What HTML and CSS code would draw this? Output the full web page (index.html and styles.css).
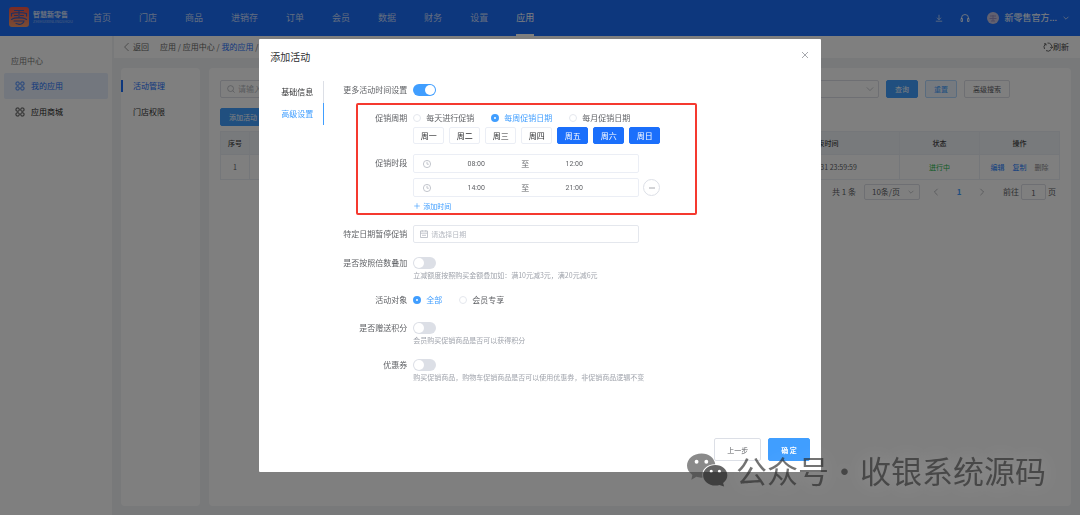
FILE: index.html
```html
<!DOCTYPE html>
<html lang="zh-CN">
<head>
<meta charset="utf-8">
<title>添加活动</title>
<link rel="stylesheet" href="styles.css">
</head>
<body>
<div class="app">
  <header class="topbar">
    <a class="brand" href="#">
      <svg class="brand-mark" viewBox="0 0 20 20" aria-hidden="true">
        <defs><linearGradient id="mark" x1="0" y1="0" x2="0" y2="1"><stop offset="0" stop-color="#f4564a"/><stop offset="1" stop-color="#f59a6a"/></linearGradient></defs>
        <rect width="20" height="20" rx="3" fill="url(#mark)"/>
        <g fill="none" stroke="#3a62c4" stroke-width="1.1" stroke-linecap="round">
          <path d="M5.500 3.500h9M2.500 9V6.500Q10 4.500 17.500 6.500V9M10 3.500v7.500M5.500 8.500h3M11.500 8.500h3M2.500 12.500c3-2.500 12-2.500 15 0M5 14h10c0 2-3 3.500-5 3.500M7 16.500l4 1"/>
        </g>
      </svg>
      <span class="brand-text"><span class="brand-name">智慧新零售</span><span class="brand-sub">ZHIHUIXINLINGSHOU</span></span>
    </a>
    <nav class="topnav">
      <a href="#">首页</a><a href="#">门店</a><a href="#">商品</a><a href="#">进销存</a><a href="#">订单</a><a href="#">会员</a><a href="#">数据</a><a href="#">财务</a><a href="#">设置</a><a class="active" href="#">应用</a>
    </nav>
    <div class="tools">
      <button class="plain" aria-label="下载"><svg class="ico small" viewBox="0 0 10 10"><path d="M5 1v6M2.500 4.700L5 7.200l2.500-2.500M1 9h8"/></svg></button>
      <button class="plain" aria-label="客服"><svg class="ico" viewBox="0 0 10 10"><path d="M1.500 6V5a3.500 3.500 0 0 1 7 0v1M1 5.500h1.500V8.500H1zM7.500 5.500H9V8.500H7.500z"/></svg></button>
      <button class="plain user"><svg class="avatar" viewBox="0 0 12 12"><circle cx="6" cy="6" r="6" fill="#c4c2e0"/><path d="M3 4h6M2.500 6.500h7M6 3v6M4 9h4" fill="none" stroke="#9a93c4"/></svg><span>新零售官方...</span><svg class="ico small" viewBox="0 0 10 10"><path d="M2 3.500l3 3 3-3"/></svg></button>
    </div>
  </header>
  <div class="body">
    <aside class="sidebar">
      <h2>应用中心</h2>
      <a class="active" href="#"><svg class="ico" viewBox="0 0 10 10"><rect x="1" y="1" width="3.200" height="3.200" rx="1"/><rect x="5.800" y="1" width="3.200" height="3.200" rx="1"/><rect x="1" y="5.800" width="3.200" height="3.200" rx="1"/><rect x="5.800" y="5.800" width="3.200" height="3.200" rx="1"/></svg>我的应用</a>
      <a href="#"><svg class="ico" viewBox="0 0 10 10"><rect x="1" y="1" width="3.200" height="3.200" rx="1"/><rect x="5.800" y="1" width="3.200" height="3.200" rx="1"/><rect x="1" y="5.800" width="3.200" height="3.200" rx="1"/><rect x="5.800" y="5.800" width="3.200" height="3.200" rx="1"/></svg>应用商城</a>
    </aside>
    <div class="content">
      <div class="crumbs">
        <button class="plain back"><svg class="ico small" viewBox="0 0 10 10"><path d="M7 0L2 5l5 5"/></svg>返回</button>
        <span>应用 / 应用中心 / <a href="#">我的应用</a> /</span>
        <button class="plain refresh"><svg class="ico" viewBox="0 0 10 10"><path d="M1.500 7A4 4 0 0 1 2.500 2M1 1.800h2v1.700M4.500 1a4 4 0 0 1 4.300 5M7.200 5.200l1.500 1.200L9.800 5M8 7.700A4 4 0 0 1 3 8.600"/></svg>刷新</button>
      </div>
      <div class="panels">
        <nav class="subnav"><a class="active" href="#">活动管理</a><a href="#">门店权限</a></nav>
        <main class="main">
          <div class="filters">
            <label class="search"><svg class="ico small" viewBox="0 0 10 10"><circle cx="4.500" cy="4.500" r="3.700"/><path d="M7.300 7.300L9.500 9.500"/></svg><input type="text" placeholder="请输入" aria-label="搜索"></label>
            <span class="select wide"><select aria-label="状态筛选"><option></option></select><svg class="ico small" viewBox="0 0 10 10"><path d="M1 3l4 4 4-4"/></svg></span>
            <button class="btn primary">查询</button>
            <button class="btn soft">重置</button>
            <button class="btn">高级搜索</button>
          </div>
          <button class="btn primary add">添加活动</button>
          <table class="grid">
            <colgroup><col class="c-no"><col><col class="c-time"><col class="c-act"><col class="c-act"></colgroup>
            <thead><tr><th>序号</th><th></th><th>结束时间</th><th>状态</th><th>操作</th></tr></thead>
            <tbody><tr><td>1</td><td></td><td>2024-12-31 23:59:59</td><td class="ok">进行中</td><td><div class="acts"><a href="#">编辑</a><a href="#">复制</a><a class="muted" href="#">删除</a></div></td></tr></tbody>
          </table>
          <div class="pager">
            <span class="total">共 1 条</span>
            <span class="select size"><select aria-label="每页条数"><option>10条/页</option></select><svg class="ico small" viewBox="0 0 10 10"><path d="M2 3.500l3 3 3-3"/></svg></span>
            <button class="plain step" aria-label="上一页"><svg class="ico small" viewBox="0 0 10 10"><path d="M7 1L3 5l4 4"/></svg></button>
            <button class="plain current">1</button>
            <button class="plain step" aria-label="下一页"><svg class="ico small" viewBox="0 0 10 10"><path d="M3 1l4 4-4 4"/></svg></button>
            <label class="jump">前往<input type="text" value="1">页</label>
          </div>
        </main>
      </div>
    </div>
  </div>
</div>

<div class="mask">
  <section class="dialog" role="dialog" aria-labelledby="dlg-title">
    <div class="dialog-head">
      <h1 id="dlg-title">添加活动</h1>
      <button class="plain close" aria-label="关闭"><svg class="ico" viewBox="0 0 10 10"><path d="M2 2l6 6M8 2L2 8"/></svg></button>
    </div>
    <div class="dialog-body">
      <nav class="tabs"><a href="#">基础信息</a><a class="active" href="#">高级设置</a></nav>
      <form class="form">
        <div class="row">
          <label class="label" for="more">更多活动时间设置</label>
          <input class="switch" type="checkbox" id="more" checked>
        </div>
        <div class="marked">
          <div class="row" role="radiogroup" aria-label="促销周期">
            <span class="label">促销周期</span>
            <div class="radios">
              <label class="daily"><input type="radio" name="cycle">每天进行促销</label>
              <label class="weekly"><input type="radio" name="cycle" checked>每周促销日期</label>
              <label><input type="radio" name="cycle">每月促销日期</label>
            </div>
          </div>
          <div class="days">
            <button type="button">周一</button><button type="button">周二</button><button type="button">周三</button><button type="button">周四</button><button type="button" class="on">周五</button><button type="button" class="on">周六</button><button type="button" class="on">周日</button>
          </div>
          <div class="row top">
            <span class="label">促销时段</span>
            <div class="times">
              <div class="time-row">
                <div class="range"><svg class="ico" viewBox="0 0 10 10"><circle cx="5" cy="5" r="3.600"/><path d="M5 2.800V5.200h1.800"/></svg><input type="text" value="08:00" aria-label="开始时间"><span>至</span><input type="text" value="12:00" aria-label="结束时间"></div>
              </div>
              <div class="time-row">
                <div class="range"><svg class="ico" viewBox="0 0 10 10"><circle cx="5" cy="5" r="3.600"/><path d="M5 2.800V5.200h1.800"/></svg><input type="text" value="14:00" aria-label="开始时间"><span>至</span><input type="text" value="21:00" aria-label="结束时间"></div>
                <button type="button" class="minus" aria-label="删除时间"><svg class="ico" viewBox="0 0 10 10"><path d="M2 5h6"/></svg></button>
              </div>
              <button type="button" class="plain add-time"><svg class="ico small" viewBox="0 0 10 10"><path d="M1.500 5h7M5 1.500v7"/></svg>添加时间</button>
            </div>
          </div>
        </div>
        <div class="row date-row">
          <label class="label" for="pause">特定日期暂停促销</label>
          <div class="date"><svg class="ico" viewBox="0 0 10 10"><path d="M1.500 2h7v6.500h-7zM1.500 4.200h7M3.200 1.200v1.500M6.800 1.200v1.500M3 6.300h4"/></svg><input type="text" id="pause" placeholder="请选择日期"></div>
        </div>
        <div class="row">
          <label class="label" for="stack">是否按照倍数叠加</label>
          <input class="switch" type="checkbox" id="stack">
        </div>
        <p class="hint">立减额度按照购买金额叠加如：满10元减3元，满20元减6元</p>
        <div class="row target" role="radiogroup" aria-label="活动对象">
          <span class="label">活动对象</span>
          <div class="radios">
            <label class="all"><input type="radio" name="target" checked>全部</label>
            <label><input type="radio" name="target">会员专享</label>
          </div>
        </div>
        <div class="row points">
          <label class="label" for="points">是否赠送积分</label>
          <input class="switch" type="checkbox" id="points">
        </div>
        <p class="hint">会员购买促销商品是否可以获得积分</p>
        <div class="row coupon">
          <label class="label" for="coupon">优惠券</label>
          <input class="switch" type="checkbox" id="coupon">
        </div>
        <p class="hint">购买促销商品，购物车促销商品是否可以使用优惠券，非促销商品逻辑不变</p>
      </form>
    </div>
    <div class="dialog-foot">
      <button class="btn big">上一步</button>
      <button class="btn big confirm">确 定</button>
    </div>
  </section>
</div>

<div class="watermark">
  <svg viewBox="0 0 42 34" aria-hidden="true">
    <path class="bubble-back" fill-rule="evenodd" d="M15 0C6.500 0 0 5.500 0 12.500c0 4 2 7 5.500 9.500L4.500 27l5-3c2 .7 4.500 1 6.500.8C14 17 20 11 29 11 28 4.500 22.500 0 15 0zM9.800 6.500a2 2 0 1 1 0 4 2 2 0 0 1 0-4zM19.800 6.500a2 2 0 1 1 0 4 2 2 0 0 1 0-4z"/>
    <path class="bubble-front" fill-rule="evenodd" d="M29 12c-7 0-12.500 4.600-12.500 10.400S22 33 29 33c1.500 0 3-.3 4.300-.7L38 34l-1-3.800c2.800-2 4.300-4.700 4.300-7.800C41.300 16.600 36 12 29 12zM24.800 16.800a1.600 1.600 0 1 1 0 3.200 1.600 1.600 0 0 1 0-3.200zM33.200 16.800a1.600 1.600 0 1 1 0 3.200 1.600 1.600 0 0 1 0-3.200z"/>
  </svg>
  <span>公众号</span><span class="dot">·</span><span>收银系统源码</span>
</div>
</body>
</html>
```
FILE: styles.css
```css
* { box-sizing: border-box; }
html, body { height: 100%; }
body {
  margin: 0;
  font: 8px/12px "Noto Sans CJK SC", sans-serif;
  color: #606266;
  overflow: hidden;
}
a { color: inherit; text-decoration: none; }
h1, h2, p { margin: 0; font-weight: 400; }
button, input, select { font: inherit; color: inherit; margin: 0; padding: 0; }
input::placeholder { color: #b4b8c0; opacity: 1; }
.plain { border: 0; background: none; display: flex; align-items: center; }
.ico { width: 10px; height: 10px; flex: none; fill: none; stroke: currentColor; stroke-width: .8; }
.ico.small { width: 8px; height: 8px; }

.app { height: 100%; display: flex; flex-direction: column; background: #f0f2f5; }
.topbar { flex: none; height: 36px; display: flex; align-items: center; padding: 0 10px 0 9px; background: #1b6ffb; color: #fff; }
.brand { display: flex; align-items: center; gap: 4px; width: 84px; }
.brand-mark { width: 20px; height: 20px; margin-bottom: 2px; }
.brand-text { display: flex; flex-direction: column; width: 40px; padding-bottom: 3px; opacity: .8; }
.brand-name { font-size: 7px; line-height: 9px; font-weight: 700; white-space: nowrap; }
.brand-sub { font-size: 4px; line-height: 5px; opacity: .6; }
.topnav { display: flex; gap: 28px; font-size: 9px; height: 36px; line-height: 36px; color: #c4d9ff; }
.topnav .active { color: #fff; box-shadow: inset 0 -2px #fff; }
.tools { margin-left: auto; display: flex; align-items: center; gap: 17px; }
.user { gap: 5px; font-size: 9px; }
.avatar { width: 12px; height: 12px; }

.body { flex: 1; min-height: 0; display: flex; }
.sidebar { width: 112px; flex: none; background: #fff; padding: 18px 4px 0; display: flex; flex-direction: column; }
.sidebar h2 { font-size: 8px; line-height: 13px; padding-left: 7px; margin-bottom: 6px; color: #777; }
.sidebar a { height: 26px; display: flex; align-items: center; gap: 6px; padding-left: 11px; border-radius: 2px; color: #222; }
.sidebar .active { background: #e6eefc; color: #1b6ffb; }
.content { flex: 1; min-width: 0; display: flex; flex-direction: column; margin-left: 2px; }
.crumbs { height: 22px; flex: none; display: flex; align-items: center; gap: 11px; padding: 0 11px 0 9px; background: #fff; color: #666; }
.crumbs a { color: #1b6ffb; }
.back { gap: 2px; }
.refresh { margin-left: auto; color: #444; }
.panels { flex: 1; min-height: 0; display: flex; gap: 9px; padding: 10px 9px 9px 7px; }
.subnav { width: 79px; flex: none; background: #fff; border-radius: 4px; padding-top: 12px; }
.subnav a { display: block; height: 12px; margin-bottom: 14px; padding-left: 10px; border-left: 2px solid transparent; color: #333; }
.subnav .active { color: #1b6ffb; border-color: #1b6ffb; }
.main { flex: 1; min-width: 0; background: #fff; border-radius: 4px; padding: 12px 11px; }

.filters { display: flex; gap: 7px; margin-bottom: 10px; padding-right: 50px; }
.search { width: 90px; height: 18px; display: flex; align-items: center; gap: 3px; padding: 0 6px; border: 1px solid #dcdfe6; border-radius: 2px; color: #a0a4ac; }
.search input { border: 0; width: 60px; background: none; }
.select { display: flex; align-items: center; height: 18px; border: 1px solid #dcdfe6; border-radius: 2px; padding-right: 4px; color: #606266; }
.select svg { color: #a8abb2; }
.select select { flex: 1; min-width: 0; border: 0; appearance: none; background: none; text-align: center; }
.select.wide { flex: 1; }
.btn { height: 18px; padding: 0 8px; font-size: 7px; line-height: 10px; border: 1px solid #dcdfe6; border-radius: 2px; background: #fff; }
.btn.primary { background: #409eff; border-color: #409eff; color: #fff; }
.btn.soft { background: #ecf5ff; border-color: #b3d8ff; color: #409eff; }
.btn.add { display: block; margin-bottom: 5px; }
.grid { width: 100%; table-layout: fixed; border-collapse: collapse; font-size: 7px; text-align: center; }
.grid th, .grid td { border: 1px solid #ebeef5; padding: 0; }
.grid th { height: 23px; background: #f1f4f9; color: #444; font-weight: 500; }
.grid td { height: 25px; }
.c-no { width: 29px; }
.c-time { width: 150px; }
.c-act { width: 80px; }
.grid .ok { color: #25b84c; }
.acts { display: flex; justify-content: center; gap: 8px; color: #1b7dff; }
.acts .muted { color: #888; }
.pager { display: flex; justify-content: flex-end; align-items: center; margin-top: 4px; padding-right: 4px; }
.total { margin-right: 8px; }
.select.size { width: 56px; height: 16px; }
.step { margin: 0 12px; color: #909399; }
.current { width: 14px; justify-content: center; color: #409eff; font-weight: 700; }
.jump { display: flex; align-items: center; gap: 2px; margin-left: 5px; }
.jump input { width: 25px; height: 16px; border: 1px solid #dcdfe6; border-radius: 2px; text-align: center; }

.mask { position: fixed; inset: 0; background: rgba(0, 0, 0, .5); display: flex; justify-content: center; align-items: flex-start; padding-top: 39px; }
.dialog { width: 52%; min-height: 433px; background: #fff; border-radius: 1px; display: flex; flex-direction: column; }
.dialog-head { display: flex; justify-content: space-between; align-items: flex-start; padding: 11px 11px 0; height: 42px; }
.dialog-head h1 { font-size: 10px; line-height: 14px; color: #303133; }
.close { color: #909399; }
.dialog-body { flex: 1; display: flex; }
.tabs { width: 65px; flex: none; align-self: flex-start; display: flex; flex-direction: column; }
.tabs a { height: 22px; line-height: 22px; padding-right: 10px; text-align: right; color: #303133; border-right: 1px solid #dcdfe6; }
.tabs .active { color: #409eff; border-color: #409eff; }
.form { flex: 1; min-width: 0; padding-top: 3px; }
.row { display: flex; align-items: center; gap: 6px; min-height: 12px; }
.row.top { align-items: flex-start; }
.label { width: 83px; flex: none; text-align: right; white-space: nowrap; }
.switch { appearance: none; width: 23px; height: 12px; border-radius: 6px; background: #dcdfe6; padding: 1px; display: flex; }
.switch::before { content: ""; width: 10px; height: 10px; border-radius: 5px; background: #fff; }
.switch:checked { background: #409eff; justify-content: flex-end; }
.marked { width: 341px; margin: 7px 0 10px 32px; padding: 7px 0 1px; border: 2px solid #f5392f; border-radius: 2px; }
.marked .label { width: 49px; }
.radios { display: flex; }
.radios label { display: flex; align-items: center; gap: 5px; white-space: nowrap; }
.radios label:has(:checked) { color: #409eff; }
.radios input { appearance: none; width: 8px; height: 8px; border: 1px solid #e4e7ed; border-radius: 4px; background: #fff; }
.radios input:checked { border: 3px solid #409eff; }
.radios .daily, .radios .weekly { margin-right: 17px; }
.radios .all { margin-right: 17px; }
.days { display: flex; gap: 5px; margin: 3px 0 10px 55px; }
.days button { width: 31px; height: 17px; line-height: 12px; border: 1px solid #ebeef5; border-radius: 2px; background: #fff; color: #303133; }
.days .on { background: #1b6ffb; border-color: #1b6ffb; color: #fff; }
.row.top .label { padding-top: 3px; }
.times { display: flex; flex-direction: column; }
.time-row { display: flex; align-items: center; gap: 4px; height: 19px; margin-bottom: 5px; }
.time-row + .time-row { margin-bottom: 3px; }
.range { width: 226px; height: 19px; display: flex; align-items: center; padding: 0 12px 0 8px; border: 1px solid #ebeef5; border-radius: 2px; }
.range .ico, .date .ico { color: #b4b8c0; }
.range input { width: 88px; border: 0; background: none; text-align: center; font: 7px/12px Roboto, "Liberation Sans", sans-serif; }
.range span { width: 10px; text-align: center; }
.minus { width: 17px; height: 17px; border: 1px solid #dcdfe6; border-radius: 9px; background: #fff; display: flex; align-items: center; justify-content: center; color: #909399; }
.add-time { color: #409eff; gap: 2px; font-size: 7px; height: 12px; }
.date { width: 226px; height: 18px; display: flex; align-items: center; gap: 2px; padding: 0 5px; border: 1px solid #e4e7ed; border-radius: 2px; }
.date input { flex: 1; min-width: 0; border: 0; background: none; font-size: 7px; }
.date-row { margin-bottom: 14px; }
.hint { margin-left: 89px; font-size: 7px; line-height: 12px; color: #a0a4ac; white-space: nowrap; }
.target { margin: 13px 0 16px; }
.coupon { margin-top: 13px; }
.dialog-foot { display: flex; justify-content: flex-end; gap: 7px; padding: 0 11px 11px; }
.btn.big { height: 23px; padding: 0 12px; }
.btn.confirm { background: #409eff; border-color: #409eff; color: #fff; font-weight: 700; }

.watermark { position: fixed; right: 34px; bottom: 23px; display: flex; align-items: center; color: rgba(40, 40, 40, .65); font-size: 31px; line-height: 44px; text-shadow: 0 0 20px rgba(255, 255, 255, .2); pointer-events: none; }
.watermark svg { width: 41px; height: 34px; margin-right: 8px; }
.bubble-back { fill: rgba(60, 60, 60, .6); }
.bubble-front { fill: rgba(35, 35, 35, .7); }
.watermark .dot { width: 31px; text-align: center; }
```
